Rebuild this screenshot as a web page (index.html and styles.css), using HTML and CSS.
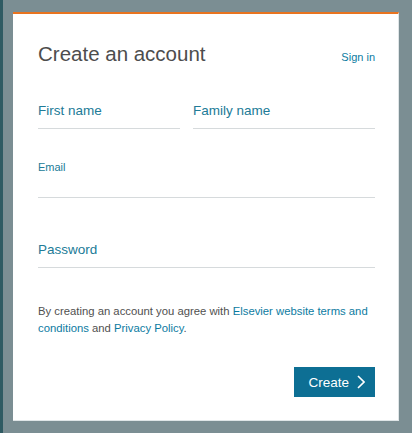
FILE: index.html
```html
<!DOCTYPE html>
<html lang="en">
  <head>
    <meta charset="UTF-8" />
    <meta name="viewport" content="width=device-width, initial-scale=1.0" />
    <title>Create an account</title>
    <link rel="stylesheet" href="styles.css">
  </head>
  <body>
    <div id="card">
      <div id="header">
        <div id="title">Create an account</div>
        <a class="link" id="signin" href="#">Sign in</a>
      </div>
      <div id="names">
        <div class="field"><span class="label">First name</span></div>
        <div class="field"><span class="label">Family name</span></div>
      </div>
      <div class="field" id="email">
        <span class="label small">Email</span>
      </div>
      <div class="field" id="password"><span class="label">Password</span></div>
      <p id="terms">
        By creating an account you agree with
        <a class="link" href="#">Elsevier website terms and</a>
        <a class="link" href="#">conditions</a>
        and <a class="link" href="#">Privacy Policy</a>.
      </p>
      <div id="actions">
        <button>
          Create
          <svg width="8" height="14" viewBox="0 0 8 14">
            <polyline points="1,1 7,7 1,13" fill="none" stroke="#fff" stroke-width="1.6" />
          </svg>
        </button>
      </div>
    </div>
  </body>
</html>
```

FILE: styles.css
```css
body {
  font-family: "Liberation Sans", Arial, sans-serif;
  margin: 0;
  padding: 12px 0 0 10px;
  height: 433px;
  box-sizing: border-box;
  background-color: #7b8e93;
  border-left: 3px solid #2e5a62;
}
#card {
  width: 386px;
  box-sizing: border-box;
  background-color: #fff;
  border-top: 2px solid #e8731f;
  border-right: 1px solid #dfe5e7;
  border-bottom: 1px solid #dfe5e7;
  padding: 28px 23px 23px 25px;
}
#header {
  display: flex;
  justify-content: space-between;
  align-items: baseline;
}
#title {
  font-size: 20.5px;
  line-height: 24px;
  color: #4d4d4d;
}
.link {
  color: #0c7ba1;
  text-decoration: none;
}
#signin {
  font-size: 11px;
}
#names {
  display: grid;
  grid-template-columns: 142px 1fr;
  column-gap: 13px;
  margin-top: 36px;
}
.field {
  padding-bottom: 8px;
  border-bottom: 1px solid #d6dadc;
}
.label {
  display: block;
  font-size: 13.5px;
  line-height: 18px;
  color: #217b97;
}
.label.small {
  font-size: 11px;
  line-height: 14px;
}
#email {
  margin-top: 31px;
  padding-bottom: 23px;
}
#password {
  margin-top: 43px;
}
#terms {
  margin: 35px 0 0;
  font-size: 11.3px;
  line-height: 17px;
  color: #505050;
}
#actions {
  display: flex;
  justify-content: flex-end;
  margin-top: 30px;
}
button {
  display: flex;
  align-items: center;
  gap: 8px;
  height: 30px;
  padding: 0 10px 0 14px;
  font-family: inherit;
  font-size: 13.5px;
  color: #fff;
  background-color: #0d6f94;
  border: none;
  cursor: pointer;
}
```
